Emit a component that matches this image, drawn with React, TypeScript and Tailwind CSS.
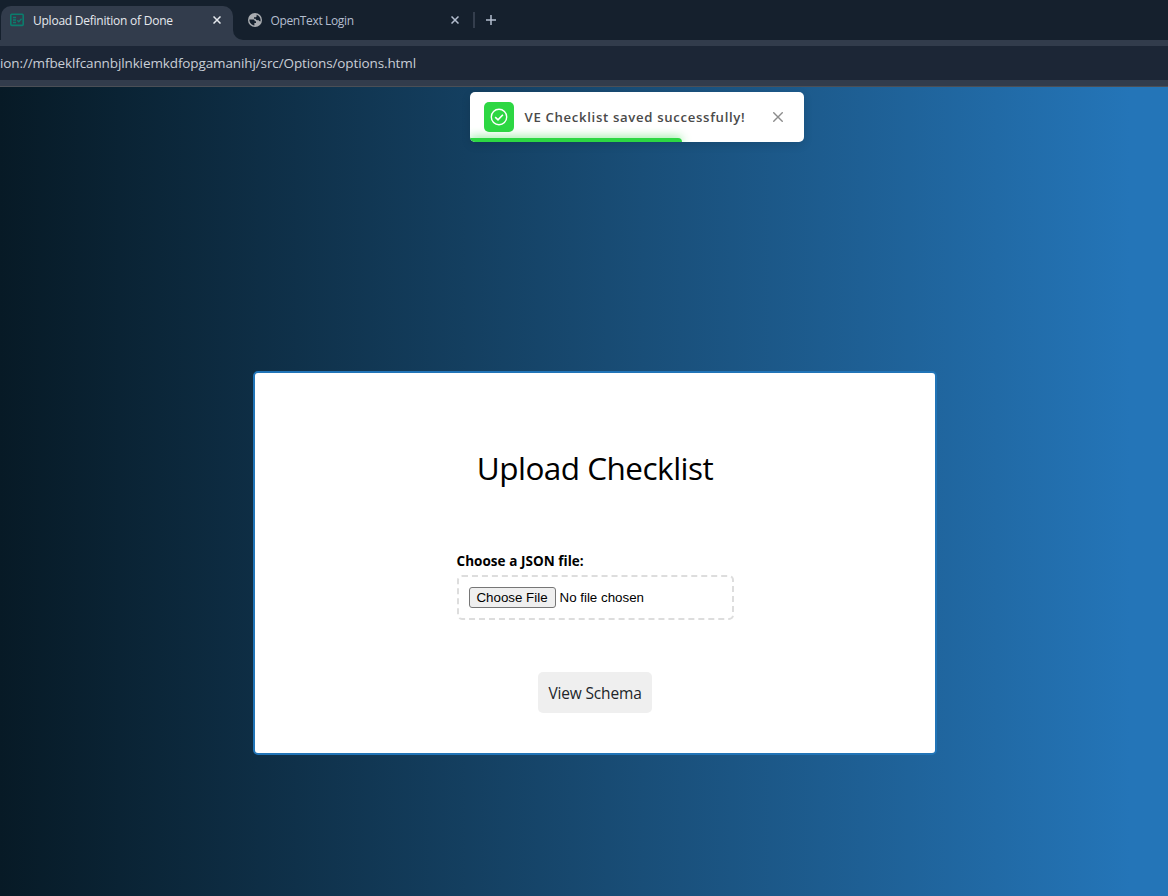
import React from 'react';

function CloseIcon({ className }: { className: string }) {
  return (
    <svg viewBox="0 0 8 8" className={className} fill="none" stroke="currentColor">
      <path d="M.5 .5 7.5 7.5M7.5 .5 .5 7.5" strokeWidth="1.5" />
    </svg>
  );
}

function TabStrip() {
  return (
    <div className="flex h-10 bg-[#15202d] text-xs">
      <div className="w-[233px] bg-[#323c4c]">
        <div className="h-10 bg-[#15202d] pt-1.5 pl-px">
          <div className="flex h-[34px] w-[232px] items-center rounded-t-[10px] bg-[#323c4c] pr-[12px] pb-[6px] pl-[9px] text-[#e6e9ee]">
            <svg viewBox="0 0 14 14" className="h-[14px] w-[14px] shrink-0" fill="none" stroke="#0b7d6d">
              <rect x=".8" y="1.2" width="12.4" height="11.2" rx="1" strokeWidth="1.6" />
              <path d="M3 4.5h3M3 7h3M3 9.5h3M7.3 7.2l1.5 1.5 2.7-2.9" strokeWidth="1.3" />
            </svg>
            <span className="mt-px ml-[9px] w-[144px] text-[12px] tracking-[-0.24px] whitespace-nowrap">Upload Definition of Done</span>
            <CloseIcon className="ml-auto h-2 w-2" />
          </div>
        </div>
      </div>
      <div className="w-[240px] bg-[#323c4c]">
        <div className="flex h-10 items-center rounded-bl-[10px] bg-[#15202d] pr-[14px] pl-[15px] text-[#b4becf]">
          <svg viewBox="0 0 14 14" className="h-[14px] w-[14px] shrink-0">
            <circle cx="7" cy="7" r="7" fill="#a9acb0" />
            <path d="M1.4 6.6h3.4c1.3 0 2 .7 2 1.7h1.2v1.6H6.4v2.6C3.6 12.300 1.300 9.900 1.400 6.600z" fill="#15202d" />
            <path d="M8.600 1.700c2.300 .7 3.900 2.700 4 5.300 0 .5-.1 1-.2 1.400-.9 0-1.400-.4-1.600-1.200H9.200c-1 0-1.500-.5-1.500-1.400H6V4.300h1.200c.9 0 1.400-.5 1.400-1.400z" fill="#15202d" />
          </svg>
          <span className="mt-[2px] ml-[8.5px] text-[12px] tracking-[-0.36px] whitespace-nowrap">OpenText Login</span>
          <CloseIcon className="ml-auto h-2 w-2" />
        </div>
      </div>
      <div className="mt-3 h-4 w-0.5 bg-[#343e4d]" />
      <svg viewBox="0 0 10 10" className="mt-[15px] ml-[11px] h-2.5 w-2.5" stroke="#b4becf" strokeWidth="1.5">
        <path d="M5 0v10M0 5h10" />
      </svg>
    </div>
  );
}

function Toast() {
  return (
    <div className="absolute top-[5px] left-[470px] flex h-[50px] w-[334px] items-center overflow-hidden rounded-[5px] bg-white pr-[21px] pl-[14px] shadow-[0_3px_10px_rgba(0,0,0,0.12)]">
      <div className="flex h-[30px] w-[30px] shrink-0 items-center justify-center rounded-[5px] bg-[#2dd743]">
        <svg viewBox="0 0 18 18" className="h-[18px] w-[18px]" fill="none" stroke="#fff" strokeWidth="1.4">
          <circle cx="9" cy="9" r="7.7" />
          <path d="M5.2 9.2 8 11.9 12.9 6.8" strokeWidth="1.6" />
        </svg>
      </div>
      <span className="mt-[2px] ml-[10.5px] text-[13.2px] font-semibold tracking-[0.66px] whitespace-nowrap text-[#4a4a4a]">VE Checklist saved successfully!</span>
      <svg viewBox="0 0 10 10" className="ml-auto h-2.5 w-2.5 shrink-0" stroke="#8c8c8c" strokeWidth="1.4">
        <path d="M.3 .3 9.7 9.7M9.7 .3 .3 9.7" />
      </svg>
      <div className="absolute bottom-0 left-0 h-1 w-[212px] rounded-tr-[4px] bg-[#2dd743] shadow-[0_0_10px_rgba(45,215,67,0.9)]" />
    </div>
  );
}

export default function App() {
  return (
    <div className="flex h-[896px] w-[1168px] flex-col overflow-hidden font-['Open_Sans','Noto_Sans',sans-serif]">
      <TabStrip />
      <div className="border-y-[6px] border-[#323c4c] bg-[#1c2636]">
        <div className="flex h-[34px] items-center text-[13.5px] tracking-[-0.115px] whitespace-nowrap text-[#c9ced6]">
          ion://mfbeklfcannbjlnkiemkdfopgamanihj/src/Options/options.html
        </div>
      </div>
      <div className="h-px bg-[#4b4f56]" />
      <main className="relative flex w-[1190px] grow flex-col items-center bg-linear-to-r from-[#071a26] via-[#194e78] via-54% to-[#2475b8] to-95% pt-[284px]">
        <Toast />
        <section className="flex h-[384px] w-[684px] flex-col items-center rounded-[5px] border-2 border-[#2174b7] bg-white text-black">
          <h1 className="mt-[72px] text-[31.5px] leading-[46px] tracking-[-0.52px] whitespace-nowrap">Upload Checklist</h1>
          <div className="mt-[60px] w-[277px]">
            <label className="block text-[13.5px] leading-5 font-bold tracking-[0.04px] whitespace-nowrap">Choose a JSON file:</label>
            <div className="mt-[4px] flex h-[45px] items-center rounded-[5px] border-2 border-dashed border-[#ddd] pl-[10px] font-['Liberation_Sans',sans-serif] text-[13.333px]">
              <button className="h-[21px] w-[87px] rounded-[3px] border border-[#767676] bg-[#efefef] leading-[18px] whitespace-nowrap">Choose File</button>
              <span className="ml-1">No file chosen</span>
            </div>
          </div>
          <button className="mt-[52px] h-[41px] w-[114px] rounded-[5px] bg-[#efefef] pt-[2px] text-[15.5px] tracking-[-0.16px] whitespace-nowrap text-[#212529]">View Schema</button>
        </section>
      </main>
    </div>
  );
}
